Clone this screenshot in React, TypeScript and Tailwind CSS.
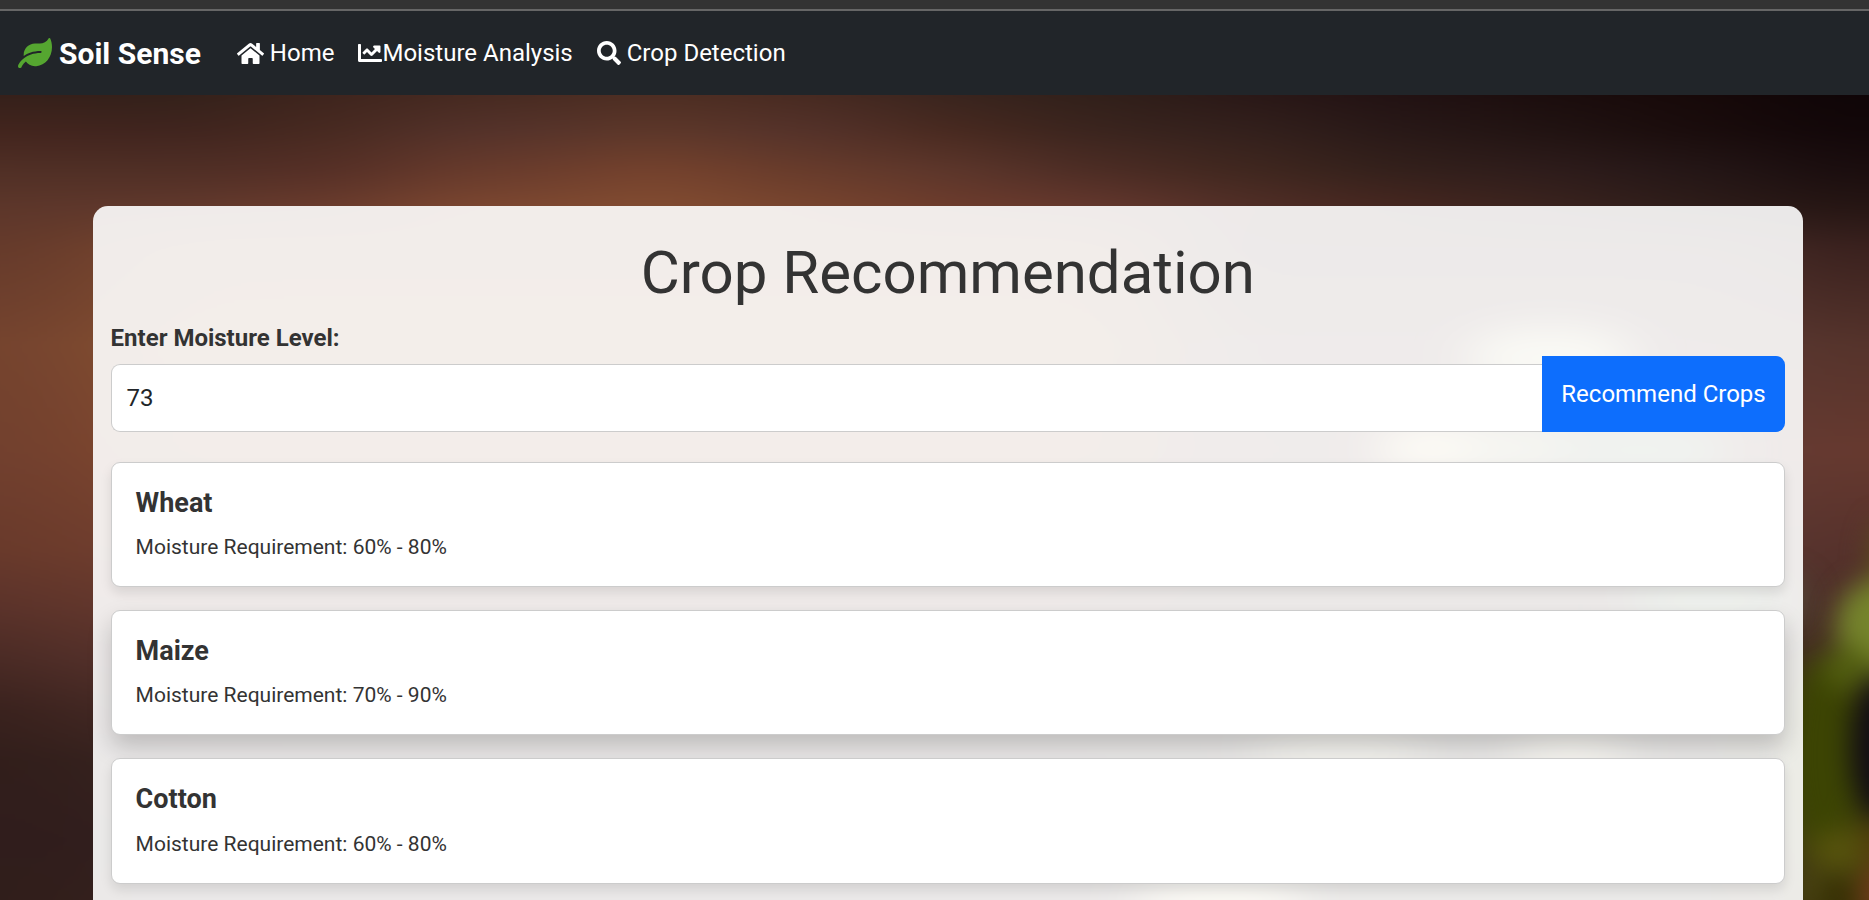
import { FaHome, FaLeaf, FaSearch } from "react-icons/fa";

const crops = [
  { name: "Wheat", range: "60% - 80%", active: false },
  { name: "Maize", range: "70% - 90%", active: true },
  { name: "Cotton", range: "60% - 80%", active: false },
];

// Vertical colour ramps of the out-of-focus backdrop, one per column.
const rampStops = [95, 130, 170, 206, 250, 345, 450, 550, 605, 658, 710, 761, 840, 900];
const innerTail = ["#7f4a30", "#8a5530", "#864e30", "#703e32", "#643830", "#55322c", "#442b27", "#3a2624", "#352222", "#3a2624"];
const rightTail = ["#4a2e28", "#5c3a34", "#633c36", "#5a3a34", "#50362f", "#483229", "#403026", "#3a2e24", "#3a2c22", "#3a2c22"];
const edgeTail = ["#3a211e", "#55332b", "#66392f", "#56312b", "#4c2e27", "#42301c", "#3f400a", "#3d4008", "#46450a", "#40380a"];
const columns = [
  { x: 0, w: 50, ramp: ["#35201a", "#42241d", "#502f25", "#5c362a", "#653a2b", "#74432e", "#71402e", "#68392b", "#5a322a", "#492a24", "#38211d", "#311e1b", "#301d1c", "#301e1b"] },
  { x: 50, w: 90, ramp: ["#34201a", "#41241e", "#502f25", "#5e372b", "#6d3f2c", "#7c4830", "#78422e", "#6f3d2c", "#63372b", "#54302a", "#432722", "#34201c", "#301d1c", "#321e1a"] },
  { x: 140, w: 110, ramp: ["#33211a", "#3f241e", "#4f2e25", "#60382c", ...innerTail] },
  { x: 250, w: 150, ramp: ["#3e241d", "#472920", "#552f26", "#683a2c", ...innerTail] },
  { x: 400, w: 180, ramp: ["#472a21", "#54322a", "#683b2c", "#7b4630", ...innerTail] },
  { x: 580, w: 150, ramp: ["#4e2e23", "#5d3729", "#75422d", "#824c31", ...innerTail] },
  { x: 730, w: 150, ramp: ["#482a21", "#54322a", "#673b2b", "#77442e", ...innerTail] },
  { x: 880, w: 140, ramp: ["#39241e", "#48291f", "#5c362b", "#6c3b2c", ...innerTail] },
  { x: 1020, w: 150, ramp: ["#31201a", "#3a241e", "#4c2c24", "#63372d", ...innerTail] },
  { x: 1170, w: 150, ramp: ["#2a1817", "#33201c", "#40271f", "#502e26", ...rightTail] },
  { x: 1320, w: 150, ramp: ["#221213", "#281817", "#33201b", "#45261f", ...rightTail] },
  { x: 1470, w: 150, ramp: ["#1b0d0d", "#211312", "#2e1c1b", "#3a231e", ...rightTail] },
  { x: 1620, w: 150, ramp: ["#170909", "#1a0c0c", "#241616", "#2d1c19", ...rightTail] },
  { x: 1770, w: 99, ramp: ["#0f0507", "#120709", "#1a0d0e", "#251513", ...edgeTail] },
];

const glows = [
  { cx: 1550, cy: 358, rx: 85, ry: 30, fill: "#cfce9e" },
  { cx: 1510, cy: 448, rx: 110, ry: 26, fill: "#a3a67c" },
  { cx: 1425, cy: 448, rx: 50, ry: 20, fill: "#fff0b0" },
  { cx: 1640, cy: 450, rx: 90, ry: 30, fill: "#6c8a68" },
  { cx: 1710, cy: 600, rx: 80, ry: 26, fill: "#5f8058" },
  { cx: 1570, cy: 752, rx: 60, ry: 18, fill: "#fff0b0" },
  { cx: 1340, cy: 752, rx: 90, ry: 18, fill: "#cfc68a" },
  { cx: 1220, cy: 900, rx: 90, ry: 18, fill: "#fff0b0" },
];

const leaves = [
  { cx: 1824, cy: 755, rx: 34, ry: 100, fill: "#3c4403" },
  { cx: 1884, cy: 560, rx: 16, ry: 40, fill: "#5a4a20" },
  { cx: 1880, cy: 625, rx: 44, ry: 46, fill: "#75842c" },
  { cx: 1848, cy: 668, rx: 26, ry: 22, fill: "#525e10" },
  { cx: 1878, cy: 748, rx: 28, ry: 72, fill: "#120d14" },
  { cx: 1838, cy: 850, rx: 26, ry: 20, fill: "#57530d" },
  { cx: 1836, cy: 898, rx: 18, ry: 16, fill: "#352f02" },
  { cx: 1810, cy: 890, rx: 8, ry: 20, fill: "#4f4b14" },
  { cx: 1882, cy: 895, rx: 22, ry: 34, fill: "#703a1a" },
  { cx: 1878, cy: 842, rx: 14, ry: 20, fill: "#543a0c" },
];

function Backdrop() {
  return (
    <svg className="absolute inset-0 h-full w-full" viewBox="0 0 1869 900" preserveAspectRatio="none" aria-hidden="true">
      <defs>
        <filter id="columns" filterUnits="userSpaceOnUse" x="-200" y="-100" width="2269" height="1100" colorInterpolationFilters="sRGB">
          <feGaussianBlur stdDeviation="58 5" />
        </filter>
        <filter id="glow" filterUnits="userSpaceOnUse" x="-200" y="-100" width="2269" height="1100" colorInterpolationFilters="sRGB">
          <feGaussianBlur stdDeviation="24 18" />
        </filter>
        <filter id="leaf" filterUnits="userSpaceOnUse" x="1600" y="400" width="469" height="700" colorInterpolationFilters="sRGB">
          <feGaussianBlur stdDeviation="13" />
        </filter>
        {columns.map((c) => (
          <linearGradient key={c.x} id={`ramp-${c.x}`} gradientUnits="userSpaceOnUse" x1="0" y1="0" x2="0" y2="900">
            {c.ramp.map((color, i) => (
              <stop key={i} offset={rampStops[i] / 900} stopColor={color} />
            ))}
          </linearGradient>
        ))}
      </defs>
      <g filter="url(#columns)">
        {columns.map((c) => {
          const left = c.x === 0 ? -200 : c.x;
          const right = c.x + c.w >= 1869 ? 2069 : c.x + c.w + 1;
          return <rect key={c.x} x={left} y="-50" width={right - left} height="1000" fill={`url(#ramp-${c.x})`} />;
        })}
      </g>
      <g filter="url(#glow)">
        {glows.map((b, i) => (
          <ellipse key={i} {...b} />
        ))}
      </g>
      <g filter="url(#leaf)">
        {leaves.map((b, i) => (
          <ellipse key={i} {...b} />
        ))}
      </g>
    </svg>
  );
}

function ChartIcon() {
  return (
    <svg className="h-6 w-6 shrink-0" viewBox="0 0 512 512" fill="currentColor" aria-hidden="true">
      <path d="M496 384H64V80c0-8.84-7.16-16-16-16H16C7.160 64 0 71.160 0 80v336c0 17.670 14.330 32 32 32h464c8.840 0 16-7.160 16-16v-32c0-8.840-7.160-16-16-16zM464 96H345.940c-21.380 0-32.090 25.850-16.970 40.970l32.400 32.400L288 242.750l-73.370-73.370c-12.500-12.500-32.760-12.500-45.250 0l-68.690 68.690c-6.250 6.250-6.250 16.380 0 22.630l22.620 22.620c6.250 6.250 16.380 6.250 22.630 0L192 237.250l73.370 73.370c12.500 12.500 32.760 12.500 45.250 0l96-96 32.400 32.400c15.120 15.120 40.970 4.410 40.970-16.970V112c.01-8.840-7.150-16-15.990-16z" />
    </svg>
  );
}

export default function App() {
  return (
    <div className="relative h-[900px] overflow-hidden font-['Roboto',sans-serif] text-2xl text-[#333]">
      <Backdrop />
      <div className="relative flex h-full flex-col">
        <div className="h-[11px] shrink-0 border-b-2 border-[#666] bg-[#333]" />
        <nav className="flex h-[84px] shrink-0 items-center bg-[#212529] pl-[18px] text-white">
          <a className="flex items-center text-[30px] leading-[45px] font-bold">
            <FaLeaf className="mr-[7px] size-[34px] text-[#55a630]" />
            Soil Sense
          </a>
          <div className="ml-9 flex items-center">
            <a className="flex items-center">
              <FaHome className="mr-[6px] size-[27px]" />
              Home
            </a>
            <a className="ml-6 flex items-center">
              <ChartIcon />
              Moisture Analysis
            </a>
            <a className="ml-6 flex items-center">
              <FaSearch className="mr-[6px] size-[24px]" />
              Crop Detection
            </a>
          </div>
        </nav>
        <main className="mt-[111px] mr-[66px] ml-[92.6px] h-[900px] shrink-0 rounded-[15px] bg-white/90 px-[18px] pt-[31px]">
          <h1 className="text-center text-[60px] leading-[72px]">Crop Recommendation</h1>
          <label className="mt-[11px] block leading-9 font-bold">Enter Moisture Level:</label>
          <div className="flex items-end">
            <div className="flex h-[68px] flex-1 items-center rounded-l-[9px] border border-r-0 border-[#ccc] bg-white pl-[15px] text-[#212529]">
              73
            </div>
            <button className="h-[76px] w-[243px] rounded-r-[9px] bg-[#0d6efd] text-white">Recommend Crops</button>
          </div>
          <div className="mt-[30px] flex flex-col gap-[22.7px]">
            {crops.map((crop) => (
              <section
                key={crop.name}
                className={
                  crop.active
                    ? "h-[125.4px] rounded-[9px] border border-[#ccc] bg-white px-6 pt-6 shadow-[0_12px_24px_rgba(0,0,0,0.2)]"
                    : "h-[125.4px] rounded-[9px] border border-[#ccc] bg-white px-6 pt-6 shadow-[0_6px_12px_rgba(0,0,0,0.1)]"
                }
              >
                <h2 className="text-[27px] leading-8 font-bold">{crop.name}</h2>
                <p className="mt-[12.35px] text-[21px] leading-8">Moisture Requirement: {crop.range}</p>
              </section>
            ))}
          </div>
        </main>
      </div>
    </div>
  );
}
